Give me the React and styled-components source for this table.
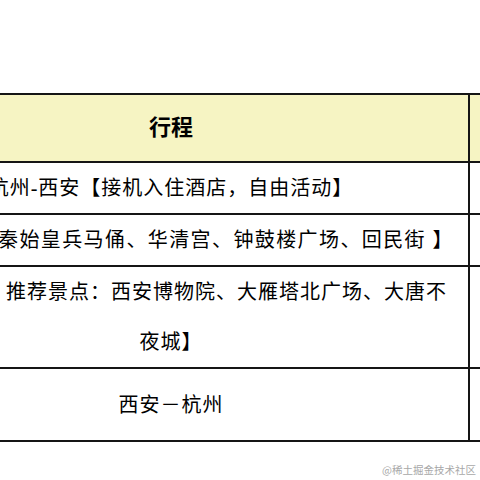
import React from 'react'
import styled, { createGlobalStyle } from 'styled-components'

const GlobalStyle = createGlobalStyle`
  html, body {
    margin: 0;
    padding: 0;
    background: #ffffff;
    overflow: hidden;
  }
  body {
    font-family: "Liberation Serif", "Noto Sans CJK SC", serif;
    color: #000000;
  }
`

const Page = styled.div`
  position: relative;
  width: 480px;
  height: 480px;
  overflow: hidden;
  padding-top: 93px;
  box-sizing: border-box;
`

const Table = styled.table`
  margin-left: -128px;
  border-collapse: collapse;
  table-layout: fixed;
  width: 720px;
`

const Row = styled.tr`
  height: ${p => p.$h}px;
  background: ${p => (p.$head ? '#f6f4c3' : '#ffffff')};
`

const Cell = styled.td`
  border: 2px solid #151515;
  padding: 0 ${p => (p.$inset ? 0 : 6)}px 0 ${p => p.$inset || 6}px;
  text-align: ${p => (p.$inset ? 'left' : 'center')};
  vertical-align: middle;
  font-size: ${p => (p.$head ? 22 : 20)}px;
  font-weight: ${p => (p.$head ? 700 : 400)};
  line-height: 50px;
  white-space: nowrap;
  letter-spacing: ${p => (p.$head ? 0 : p.$inset ? 1.4 : 1)}px;
`

const Line = styled.div`
  text-align: ${p => p.$align || 'center'};
  padding-left: ${p => p.$pad || 0}px;
`

const Mark = styled.div`
  position: absolute;
  right: 4px;
  bottom: 3px;
  font-family: "Noto Sans CJK SC", sans-serif;
  font-size: 10.5px;
  color: #a8a8a8;
`

const rows = [
  { h: 52, text: '杭州-西安【接机入住酒店，自由活动】' },
  { h: 51, text: '秦始皇兵马俑、华清宫、钟鼓楼广场、回民街 】', inset: 124 },
]

const App = () => {
  return (
    <Page>
      <GlobalStyle />
      <Table>
        <colgroup>
          <col style={{ width: 596 }} />
          <col />
        </colgroup>
        <tbody>
          <Row $h={68} $head>
            <Cell $head>行程</Cell>
            <Cell />
          </Row>
          {rows.map((r, i) => (
            <Row key={i} $h={r.h}>
              <Cell $inset={r.inset}>{r.text}</Cell>
              <Cell />
            </Row>
          ))}
          <Row $h={102}>
            <Cell>
              <Line $align="left" $pad={126}>推荐景点：西安博物院、大雁塔北广场、大唐不</Line>
              <Line>夜城】</Line>
            </Cell>
            <Cell />
          </Row>
          <Row $h={73}>
            <Cell>西安－杭州</Cell>
            <Cell />
          </Row>
        </tbody>
      </Table>
      <Mark>@稀土掘金技术社区</Mark>
    </Page>
  )
}

export default App
